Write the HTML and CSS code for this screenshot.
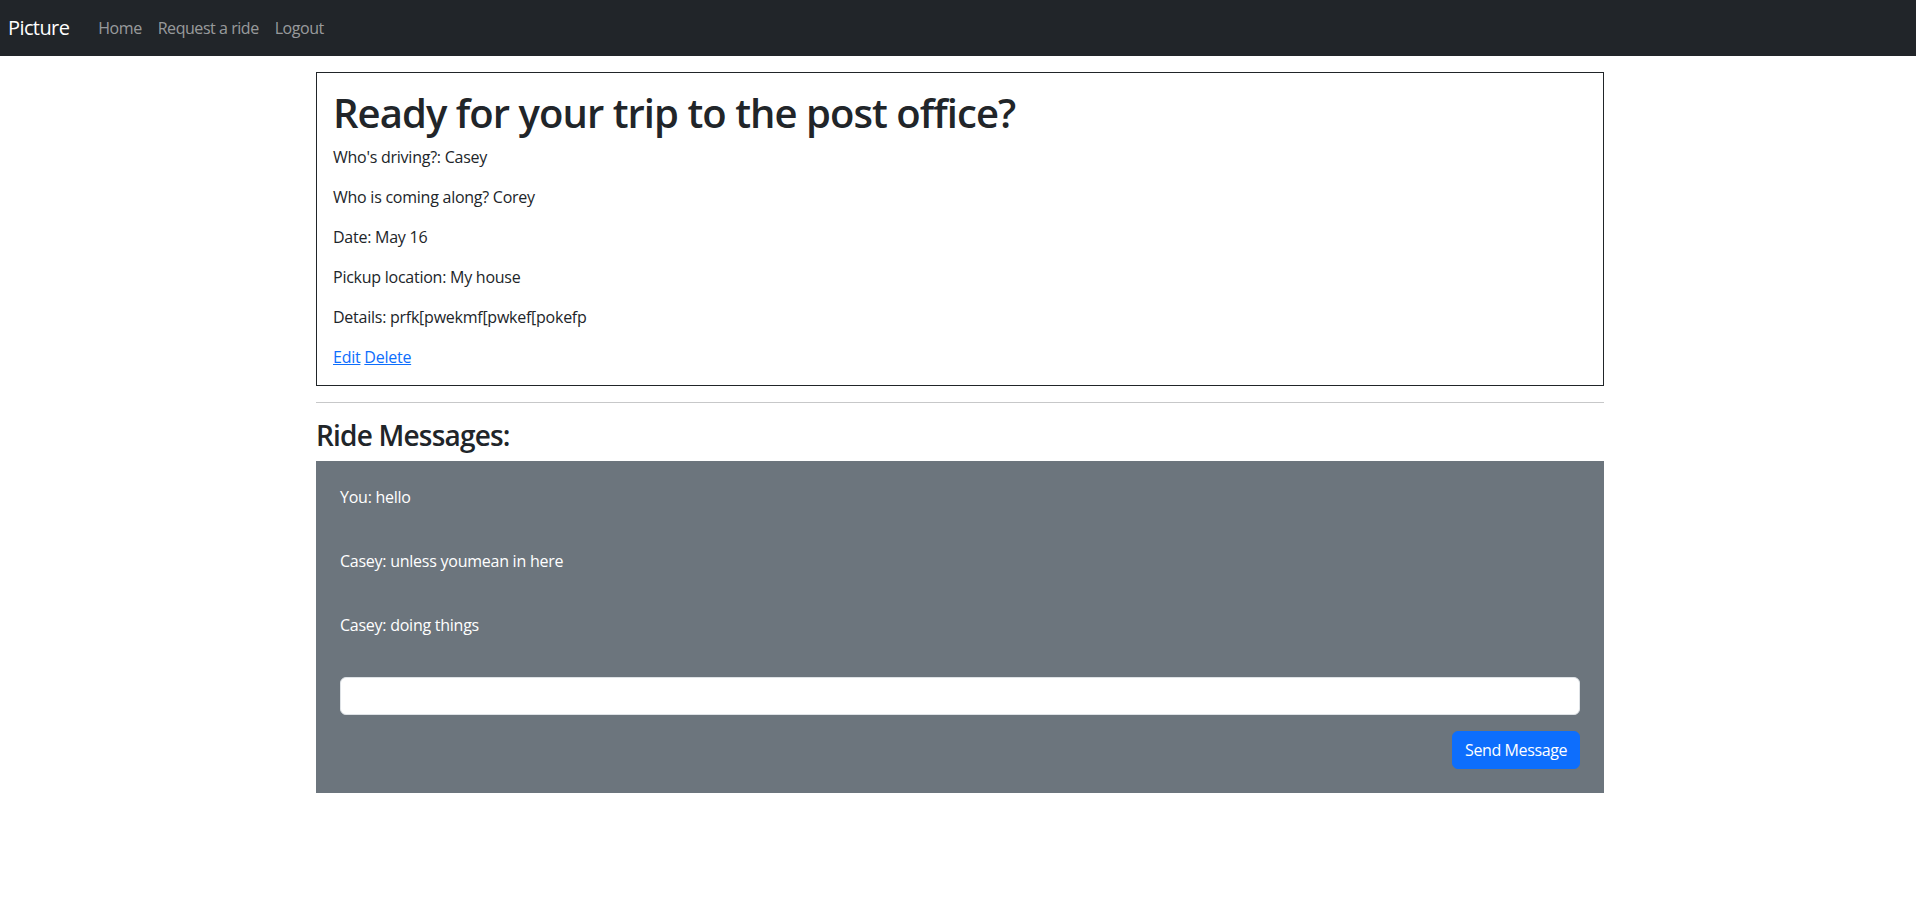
FILE: index.html
```html
<!DOCTYPE html>
<html lang="en">
<head>
<meta charset="utf-8">
<title>Picture</title>
<link rel="stylesheet" href="styles.css">
</head>
<body>
<nav class="navbar">
  <a class="brand" href="#">Picture</a>
  <ul class="nav">
    <li><a class="nav-link" href="#">Home</a></li>
    <li><a class="nav-link" href="#">Request a ride</a></li>
    <li><a class="nav-link" href="#">Logout</a></li>
  </ul>
</nav>
<main class="container">
  <section class="ride-card">
    <h1 class="ride-title">Ready for your trip to the post office?</h1>
    <p>Who's driving?: Casey</p>
    <p>Who is coming along? Corey</p>
    <p>Date: May 16</p>
    <p>Pickup location: My house</p>
    <p>Details: prfk[pwekmf[pwkef[pokefp</p>
    <p class="actions"><a href="#">Edit</a> <a href="#">Delete</a></p>
  </section>
  <hr class="divider">
  <h3 class="section-title">Ride Messages:</h3>
  <section class="messages">
    <p class="message">You: hello</p>
    <p class="message">Casey: unless youmean in here</p>
    <p class="message">Casey: doing things</p>
    <form class="message-form">
      <input class="form-control" type="text">
      <div class="form-actions">
        <button class="btn-primary" type="button">Send Message</button>
      </div>
    </form>
  </section>
</main>
</body>
</html>
```
FILE: styles.css
```css
* { box-sizing: border-box; }
body {
  margin: 0;
  font-family: "Open Sans", "Noto Sans", sans-serif;
  font-size: 16px;
  line-height: 1.5;
  letter-spacing: -0.25px;
  color: #212529;
  background: #fff;
}
a { color: #0d6efd; }
.navbar {
  display: flex;
  align-items: center;
  height: 56px;
  padding: 0 8px;
  background: #212529;
}
.brand {
  color: #fff;
  text-decoration: none;
  font-size: 20px;
  letter-spacing: -0.6px;
  margin-right: 21px;
}
.nav {
  display: flex;
  list-style: none;
  margin: 0;
  padding: 0;
}
.nav-link {
  display: block;
  padding: 8px;
  letter-spacing: -0.45px;
  color: rgba(255,255,255,.55);
  text-decoration: none;
}
.container {
  width: 1288px;
  margin-left: calc(50% - 642px);
  padding-top: 16px;
}
.ride-card {
  border: 1px solid #212529;
  padding: 16px;
}
.ride-title {
  font-size: 40px;
  font-weight: 600;
  line-height: 1.2;
  letter-spacing: -0.95px;
  margin: 0 0 8px;
}
.ride-card p { margin: 0 0 16px; }
.ride-card p.actions { margin-bottom: 0; }
.divider {
  margin: 16px 0;
  border: 0;
  border-top: 1px solid #212529;
  opacity: .25;
}
.section-title {
  font-size: 28px;
  font-weight: 600;
  line-height: 1.2;
  letter-spacing: -0.8px;
  margin: 0 0 8px;
}
.messages {
  background: #6c757d;
  color: #fff;
  padding: 24px;
}
.message { margin: 0 0 40px; }
.form-control {
  display: block;
  width: 100%;
  height: 38px;
  padding: 6px 12px;
  font: inherit;
  border: 1px solid #dee2e6;
  border-radius: 6px;
  background: #fff;
}
.form-actions {
  display: flex;
  justify-content: flex-end;
  margin-top: 16px;
}
.btn-primary {
  font: inherit;
  letter-spacing: -0.4px;
  color: #fff;
  background: #0d6efd;
  border: 1px solid #0d6efd;
  border-radius: 6px;
  padding: 6px 12px;
  line-height: 1.5;
}
```
